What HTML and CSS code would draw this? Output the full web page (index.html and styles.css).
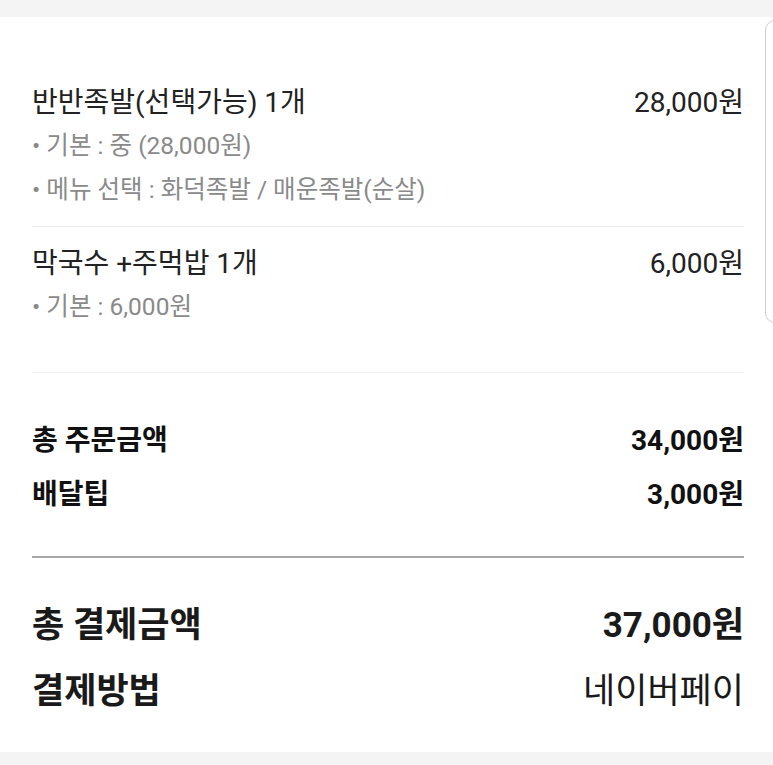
FILE: index.html
```html
<!DOCTYPE html>
<html lang="ko">
<head>
<meta charset="utf-8">
<link rel="stylesheet" href="styles.css">
</head>
<body>
<div class="page">
  <div class="card">
    <section class="items">
      <div class="item first">
        <div class="row title"><span>반반족발(선택가능) 1개</span><span>28,000원</span></div>
        <div class="sub">• 기본 : 중 (28,000원)</div>
        <div class="sub">• 메뉴 선택 : 화덕족발 / 매운족발(순살)</div>
      </div>
      <div class="item">
        <div class="row title"><span>막국수 +주먹밥 1개</span><span>6,000원</span></div>
        <div class="sub">• 기본 : 6,000원</div>
      </div>
    </section>
    <section class="summary">
      <div class="row sum"><span>총 주문금액</span><span>34,000원</span></div>
      <div class="row sum"><span>배달팁</span><span>3,000원</span></div>
    </section>
    <section class="total">
      <div class="row big"><span>총 결제금액</span><span>37,000원</span></div>
      <div class="row big"><span>결제방법</span><span class="normal">네이버페이</span></div>
    </section>
  </div>
  <div class="edge"></div>
</div>
</body>
</html>
```

FILE: styles.css
```css
html, body {
  margin: 0;
  padding: 0;
  background: #f4f4f4;
}
body {
  font-family: Roboto, "Noto Sans CJK KR", sans-serif;
  color: #222;
}
.page {
  position: relative;
  width: 773px;
  height: 765px;
  padding-top: 17px;
  box-sizing: border-box;
  overflow: hidden;
}
.card {
  background: #fff;
  height: 735px;
  padding: 0 29px 0 32px;
  box-sizing: border-box;
}
.row {
  display: flex;
  justify-content: space-between;
  align-items: center;
  white-space: nowrap;
}
.items {
  padding-top: 61px;
  padding-bottom: 45px;
  border-bottom: 1px solid #f0f0f0;
}
.item.first {
  padding-bottom: 16px;
  border-bottom: 1px solid #ececec;
}
.item + .item {
  padding-top: 12px;
}
.title {
  height: 44px;
  font-size: 28px;
  color: #222;
}
.sub {
  margin-top: 1px;
  height: 43px;
  line-height: 45px;
  font-size: 24.5px;
  color: #8a8a8a;
  white-space: nowrap;
}
.summary {
  padding-top: 38px;
  padding-bottom: 37px;
  border-bottom: 2px solid #a8a8a8;
}
.sum {
  height: 54px;
  font-size: 28px;
  font-weight: 700;
  color: #111;
}
.total {
  padding-top: 30px;
}
.big {
  height: 66px;
  font-size: 35px;
  font-weight: 700;
  color: #1a1a1a;
}
.big .normal {
  font-weight: 400;
}
.edge {
  position: absolute;
  left: 765px;
  top: 20px;
  width: 30px;
  height: 303px;
  border: 1.5px solid #cfcfcf;
  border-radius: 10px;
  background: #fff;
  box-sizing: border-box;
}
```
